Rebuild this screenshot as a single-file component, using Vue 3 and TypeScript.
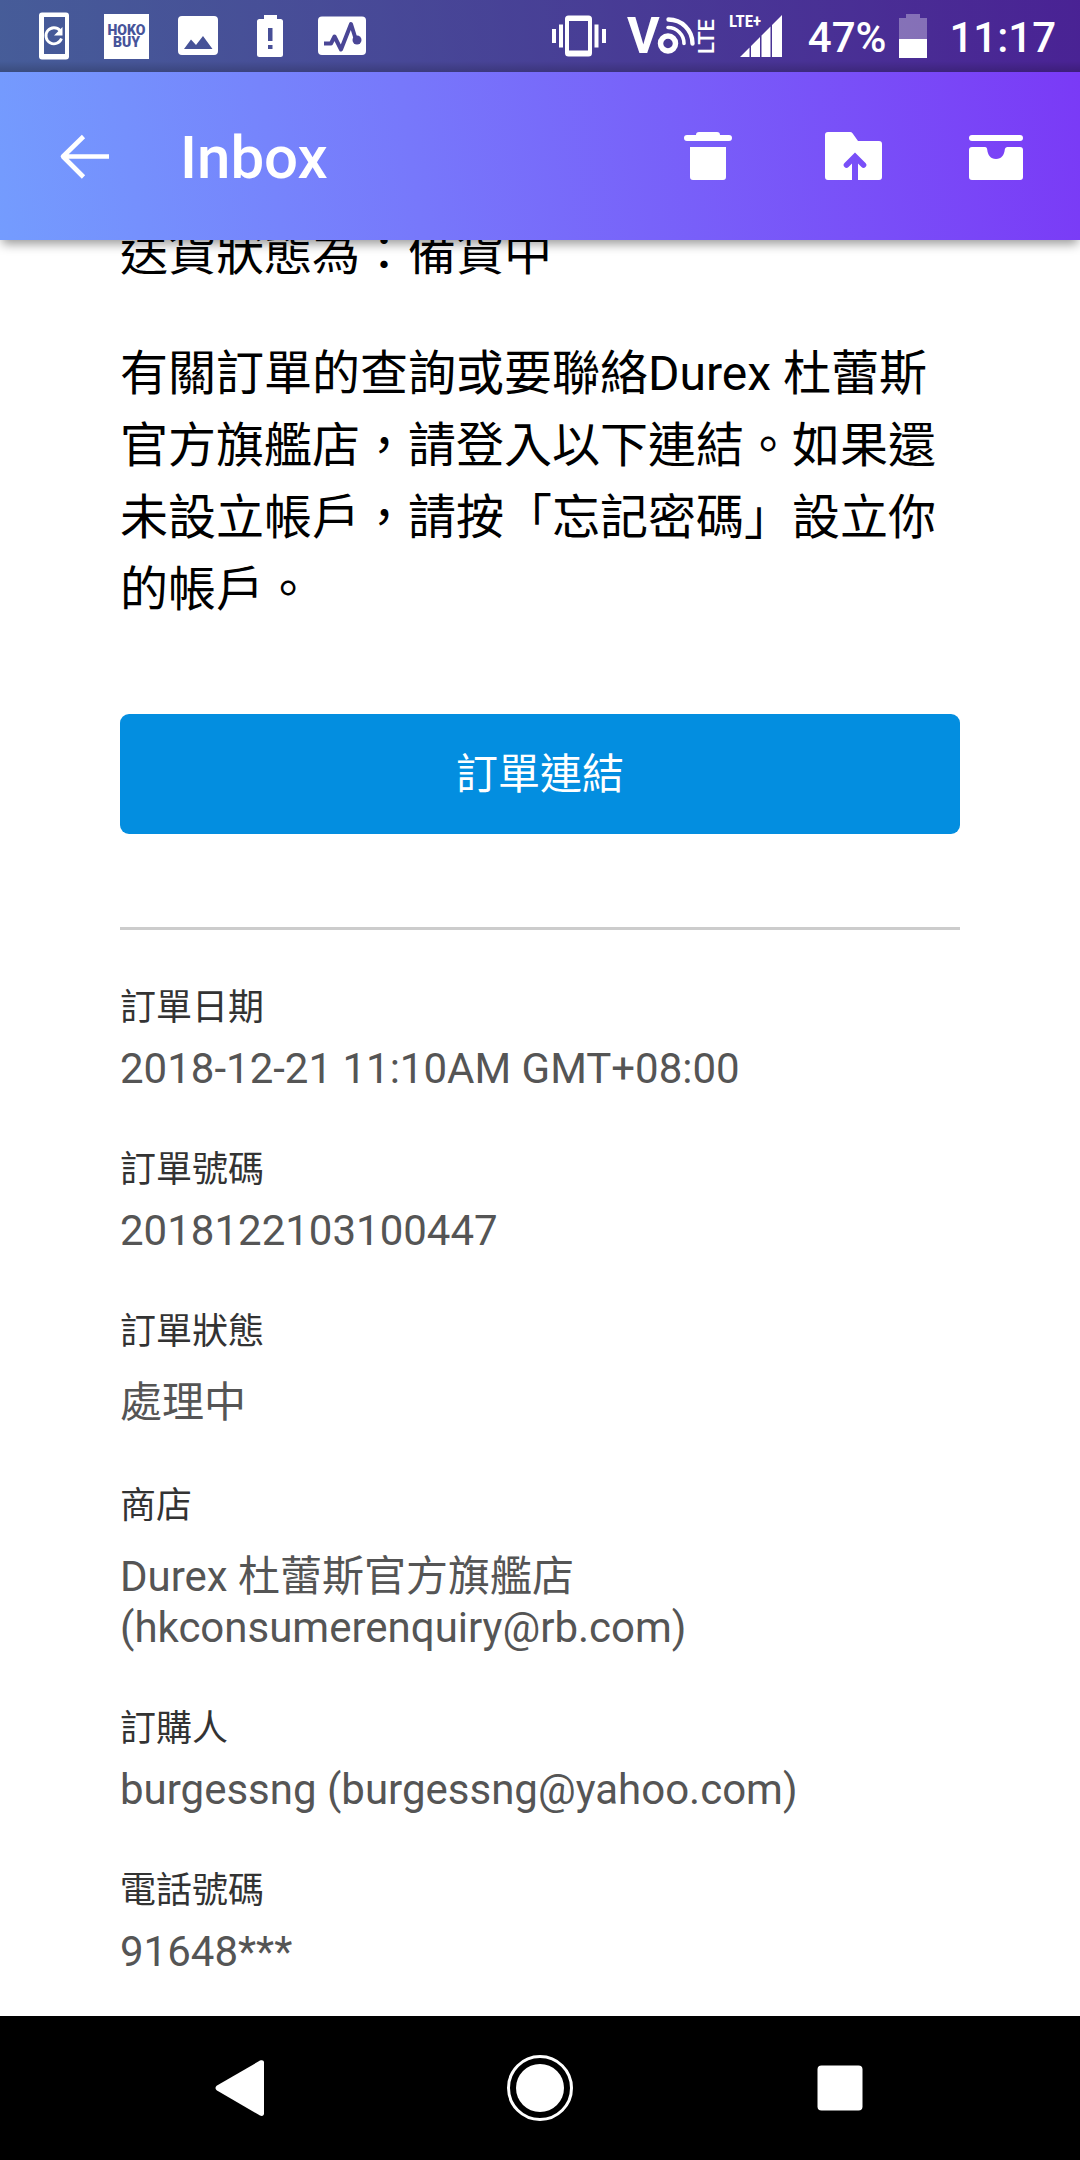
<script setup lang="ts">
interface OrderField {
  label: string
  lines: string[]
}

const intro: string[] = [
  '送貨狀態為：備貨中',
  '有關訂單的查詢或要聯絡Durex 杜蕾斯官方旗艦店，請登入以下連結。如果還未設立帳戶，請按「忘記密碼」設立你的帳戶。',
]

const fields: OrderField[] = [
  { label: '訂單日期', lines: ['2018-12-21 11:10AM GMT+08:00'] },
  { label: '訂單號碼', lines: ['2018122103100447'] },
  { label: '訂單狀態', lines: ['處理中'] },
  { label: '商店', lines: ['Durex 杜蕾斯官方旗艦店', '(hkconsumerenquiry@rb.com)'] },
  { label: '訂購人', lines: ['burgessng (burgessng@yahoo.com)'] },
  { label: '電話號碼', lines: ['91648***'] },
]
</script>

<template>
  <div class="screen" lang="zh-HK">
    <header class="top">
      <div class="status">
        <div class="status-left">
          <!-- phone with refresh arrow -->
          <svg width="48" height="48" viewBox="0 0 48 48" aria-hidden="true">
            <path fill="#fff" fill-rule="evenodd" d="M12 .5h24a3 3 0 0 1 3 3v41a3 3 0 0 1-3 3H12a3 3 0 0 1-3-3v-41a3 3 0 0 1 3-3zM14 5v37h21V5z" />
            <path fill="none" stroke="#fff" stroke-width="2.8" d="M30 18.5a8 8 0 1 0 1.500 8" />
            <path fill="#fff" d="M32.500 15v8.500H24z" />
          </svg>
          <!-- shopping app badge -->
          <svg width="48" height="48" viewBox="0 0 48 48" aria-hidden="true">
            <rect x="2" y="2" width="45" height="45" fill="#fff" />
            <text x="24.500" y="23" text-anchor="middle" class="badge-text">HOKO</text>
            <text x="24.500" y="35" text-anchor="middle" class="badge-text">BUY</text>
          </svg>
          <!-- picture -->
          <svg width="48" height="48" viewBox="0 0 48 48" aria-hidden="true">
            <path fill="#fff" fill-rule="evenodd" d="M8 4h32a4 4 0 0 1 4 4v31a4 4 0 0 1-4 4H8a4 4 0 0 1-4-4V8a4 4 0 0 1 4-4zM10 37h28.500l-9.500-13-7 9-5-5.500z" />
          </svg>
          <!-- battery alert -->
          <svg width="48" height="48" viewBox="0 0 48 48" aria-hidden="true">
            <path fill="#fff" fill-rule="evenodd" d="M18 3h13v4h3.500a2.500 2.500 0 0 1 2.500 2.500v33a2.500 2.500 0 0 1-2.500 2.500h-21a2.500 2.500 0 0 1-2.500-2.500v-33A2.500 2.500 0 0 1 13.500 7H18zM22 16v13h4.500V16zM22 33v4h4.500v-4z" />
          </svg>
          <!-- activity chart -->
          <svg width="48" height="48" viewBox="0 0 48 48" aria-hidden="true">
            <rect x="0" y="4.500" width="48" height="38.500" rx="4" fill="#fff" />
            <path fill="none" stroke="#4a4696" stroke-width="4" stroke-linejoin="round" d="M6 31.500h7l3.500-7 6.500 13L33 12l5 16" />
            <circle cx="39" cy="28" r="4.500" fill="#4a4696" />
          </svg>
        </div>

        <div class="status-right">
          <!-- vibrate -->
          <svg width="56" height="48" viewBox="0 0 56 48" aria-hidden="true">
            <path fill="#fff" fill-rule="evenodd" d="M17.500 3.500h20a3.500 3.500 0 0 1 3.500 3.500v34a3.500 3.500 0 0 1-3.500 3.500h-20A3.500 3.500 0 0 1 14 41V7a3.500 3.500 0 0 1 3.500-3.500zM18 9v29.500h19V9z" />
            <path fill="#fff" d="M1 17h4v14H1zM8 12.500h4v23H8zM43.500 12.500h4v23h-4zM51 17h4v14h-4z" />
          </svg>
          <!-- voice over LTE -->
          <svg class="volte" width="88" height="72" viewBox="0 0 88 72" aria-hidden="true">
            <text x="0" y="53" class="volte-v">V</text>
            <circle cx="41" cy="43.500" r="7.500" fill="none" stroke="#fff" stroke-width="5.500" />
            <path fill="none" stroke="#fff" stroke-width="3.600" stroke-linecap="round" d="M41 27.500a16 16 0 0 1 16 16" />
            <path fill="none" stroke="#fff" stroke-width="4.400" stroke-linecap="round" d="M41.500 19.500A24 24 0 0 1 65.500 43.500" />
            <text transform="translate(87 54) rotate(-90)" class="volte-lte">LTE</text>
          </svg>
          <!-- mobile signal -->
          <svg class="signal" width="54" height="48" viewBox="0 0 54 48" aria-hidden="true">
            <text x="0" y="15" class="signal-text">LTE+</text>
            <path fill="#fff" d="M11 45l9.500-9.500V45zM22 45V34l9-9v20zM32.500 45V23.500l9-9V45zM43 45V13L53 3v42z" />
          </svg>
          <span class="status-text percent">47%</span>
          <!-- battery level -->
          <svg width="28" height="48" viewBox="0 0 28 48" aria-hidden="true">
            <path fill="#fff" fill-opacity=".33" d="M7 2h14v4h7v21H0V6h7z" />
            <path fill="#fff" d="M0 27h28v19H0z" />
          </svg>
          <span class="status-text time">11:17</span>
        </div>
      </div>

      <div class="bar">
        <button class="icon-button" type="button" aria-label="Back">
          <svg width="72" height="72" viewBox="0 0 72 72" aria-hidden="true">
            <path fill="none" stroke="#fff" stroke-width="4.600" stroke-linejoin="round" d="M35.500 16.500L15 36.500l20.500 20.500M15 36.500h46" />
          </svg>
        </button>
        <h1>Inbox</h1>
        <div class="actions">
          <button class="icon-button" type="button" aria-label="Delete">
            <svg width="72" height="72" viewBox="0 0 72 72" aria-hidden="true">
              <path fill="#fff" d="M15 15h9a3 3 0 0 1 3-3h18a3 3 0 0 1 3 3h9a3 3 0 0 1 0 6H15a3 3 0 0 1 0-6zM18 27h36v30a3 3 0 0 1-3 3H21a3 3 0 0 1-3-3z" />
            </svg>
          </button>
          <button class="icon-button" type="button" aria-label="Move to folder">
            <svg width="72" height="72" viewBox="0 0 72 72" aria-hidden="true">
              <path fill="#fff" d="M12 12h22a3 3 0 0 1 2.500 1.200L42 21h21a3 3 0 0 1 3 3v33a3 3 0 0 1-3 3H42V43.500l3.500 3.500a2.700 2.700 0 0 0 4-4L39 32.500 28.500 43a2.700 2.700 0 0 0 4 4l3.500-3.500V60H12a3 3 0 0 1-3-3V15a3 3 0 0 1 3-3z" />
            </svg>
          </button>
          <button class="icon-button" type="button" aria-label="Archive">
            <svg width="72" height="72" viewBox="0 0 72 72" aria-hidden="true">
              <path fill="#fff" d="M12 15h48a3 3 0 0 1 0 6H12a3 3 0 0 1 0-6zM12 27h13c1.500 0 2 1.200 2.200 2.500C27.800 35 30.500 39 36 39s8.200-4 8.800-9.500C45 28.200 46 27 47.500 27H60a3 3 0 0 1 3 3v27a3 3 0 0 1-3 3H12a3 3 0 0 1-3-3V30a3 3 0 0 1 3-3z" />
            </svg>
          </button>
        </div>
      </div>
    </header>

    <main class="mail">
      <p v-for="text in intro" :key="text">{{ text }}</p>
      <a class="order-link" href="#order">訂單連結</a>
      <hr />
      <dl>
        <div v-for="field in fields" :key="field.label" class="field">
          <dt>{{ field.label }}</dt>
          <dd>
            <span v-for="line in field.lines" :key="line">{{ line }}</span>
          </dd>
        </div>
      </dl>
    </main>

    <nav class="system-nav">
      <button type="button" aria-label="System back">
        <svg width="72" height="72" viewBox="0 0 72 72" aria-hidden="true">
          <path fill="#fff" d="M13 33.500L56 8.600c2-1 4-.4 4 2V61.500c0 2.300-2 3-4 2L13 38.500c-2-1.300-2-3.700 0-5z" />
        </svg>
      </button>
      <button type="button" aria-label="Home">
        <svg width="72" height="72" viewBox="0 0 72 72" aria-hidden="true">
          <circle cx="36" cy="36" r="31.500" fill="none" stroke="#fff" stroke-width="3" />
          <circle cx="36" cy="36" r="24" fill="#fff" />
        </svg>
      </button>
      <button type="button" aria-label="Recent apps">
        <svg width="72" height="72" viewBox="0 0 72 72" aria-hidden="true">
          <rect x="13.500" y="13.500" width="45" height="45" rx="4" fill="#fff" />
        </svg>
      </button>
    </nav>
  </div>
</template>

<style>
body {
  margin: 0;
  background: #fff;
}
</style>

<style scoped>
.screen {
  display: flex;
  flex-direction: column;
  min-height: 100vh;
  font-family: Roboto, "Noto Sans CJK TC", sans-serif;
  text-autospace: no-autospace;
}

button {
  display: flex;
  padding: 0;
  border: 0;
  background: none;
}

svg {
  display: block;
  flex: none;
  overflow: visible;
}

.top {
  position: relative;
  color: #fff;
  background: linear-gradient(82deg, #749cfe 0%, #7778fb 38%, #7a39f6 100%);
  box-shadow: 0 6px 10px -2px rgba(0, 0, 0, 0.4);
}

.status {
  display: flex;
  justify-content: space-between;
  align-items: center;
  height: 72px;
  padding: 0 24px 0 30px;
  background: linear-gradient(rgba(0, 0, 0, 0.4) 85%, rgba(0, 0, 0, 0.5));
}

.status-left {
  display: flex;
  gap: 24px;
}

.status-right {
  display: flex;
  align-items: center;
}

.volte {
  margin-left: 20px;
}

.signal {
  margin-left: 14px;
}

.status-text {
  padding-top: 3px;
  font-size: 42px;
  font-weight: 500;
  line-height: 48px;
}

.percent {
  margin: 0 13px 0 25px;
}

.time {
  margin-left: 22px;
}

.badge-text {
  font-family: Roboto, sans-serif;
  font-size: 14px;
  font-weight: 900;
  fill: #47549a;
}

.volte-v {
  font-size: 50px;
  font-weight: 700;
  fill: #fff;
}

.volte-lte {
  font-size: 22px;
  font-weight: 500;
  fill: #fff;
}

.signal-text {
  font-family: "Roboto Condensed", "Liberation Sans Narrow", "Open Sans Condensed", Roboto, sans-serif;
  font-size: 17px;
  font-weight: 700;
  fill: #fff;
}

.bar {
  display: flex;
  align-items: center;
  height: 168px;
  padding: 0 48px;
}

h1 {
  margin: 0 0 0 60px;
  padding-top: 4px;
  font-size: 60px;
  font-weight: 500;
  line-height: 72px;
}

.actions {
  display: flex;
  gap: 72px;
  margin-left: auto;
}

/* The message is scrolled, so its first line starts beneath the app bar. */
.mail {
  flex: 1;
  margin-top: -22px;
  padding: 0 120px 40px;
}

p {
  margin: 0 0 48px;
  color: #000;
  font-size: 48px;
  line-height: 72px;
}

.order-link {
  display: block;
  margin-top: 88px;
  padding-top: 2px;
  border-radius: 9px;
  background: #038ee0;
  color: #fff;
  font-size: 42px;
  line-height: 118px;
  text-align: center;
  text-decoration: none;
}

hr {
  height: 3px;
  margin: 93px 0 48px;
  border: 0;
  background: #ccc;
}

dl {
  margin: 0;
}

.field + .field {
  margin-top: 47px;
}

dt {
  color: #333;
  font-size: 36px;
}

dd {
  margin: 14px 0 0;
  color: #555;
  font-size: 42px;
}

dd span {
  display: block;
}

.system-nav {
  display: flex;
  justify-content: center;
  align-items: center;
  gap: 228px;
  height: 144px;
  background: #000;
}
</style>
